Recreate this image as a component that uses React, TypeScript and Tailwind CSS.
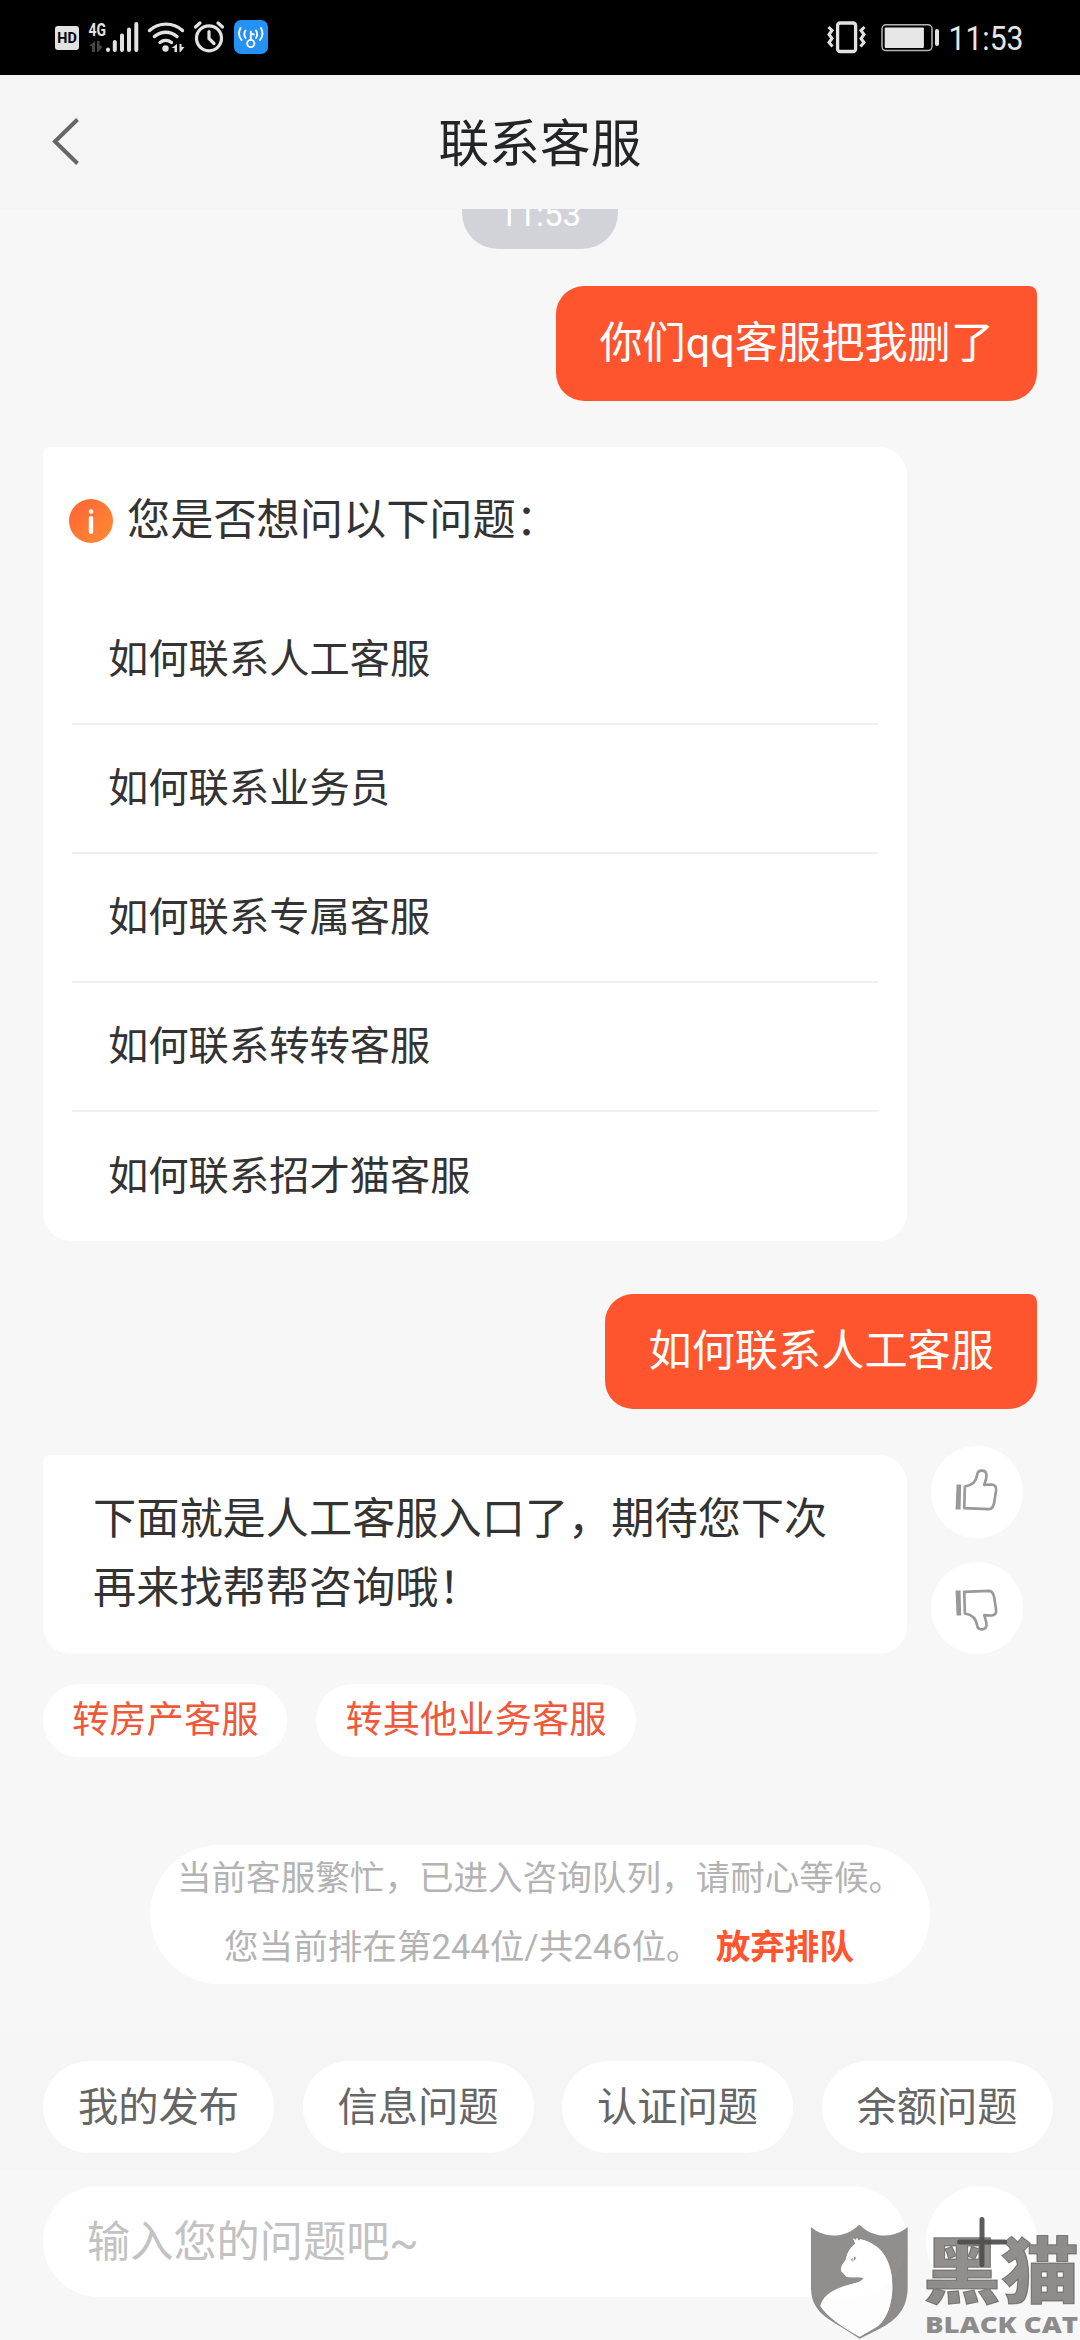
import React from 'react';
import { clsx } from 'clsx';

interface SentBubbleProps {
  text: string;
  className?: string;
}

const questions = [
  '如何联系人工客服',
  '如何联系业务员',
  '如何联系专属客服',
  '如何联系转转客服',
  '如何联系招才猫客服',
];

const transfers = ['转房产客服', '转其他业务客服'];

const shortcuts = ['我的发布', '信息问题', '认证问题', '余额问题'];

const StatusBar: React.FC = () => (
  <div className="flex h-[75px] shrink-0 justify-between bg-black">
    <svg className="h-[75px] w-[280px]" viewBox="0 0 280 75" fill="none">
      {/* HD */}
      <rect x="55" y="26" width="24" height="24" rx="3" fill="#e2e2e2" />
      <text
        x="57.3"
        y="43.3"
        fontSize="15.5"
        fontWeight="700"
        fill="#000"
        textLength="19.5"
        lengthAdjust="spacingAndGlyphs"
        fontFamily="Roboto"
      >
        HD
      </text>
      {/* mobile signal */}
      <text
        x="88.5"
        y="35.5"
        fontSize="18.5"
        fontWeight="700"
        fill="#e2e2e2"
        textLength="17.5"
        lengthAdjust="spacingAndGlyphs"
        fontFamily="Roboto"
      >
        4G
      </text>
      <path d="M95 41v11h-3v-6h-3zM97 41h2.500v4l3 2-4.500 5h-1z" fill="#454545" />
      <path
        d="M108 49.500v.5M114.800 42v8M122 35.500v14.500M129 29.500v20.500M136.300 24v26"
        stroke="#e2e2e2"
        strokeWidth="4"
        strokeLinecap="round"
      />
      {/* wifi */}
      <path
        d="M149.500 30.500a24.500 24.500 0 0 1 33 0M154.500 36.500a17 17 0 0 1 22.500 0M160 42.500a9.500 9.500 0 0 1 11.500 0"
        stroke="#e2e2e2"
        strokeWidth="3.4"
        strokeLinecap="round"
      />
      <circle cx="165.500" cy="48.500" r="3.200" fill="#e2e2e2" />
      <path d="M177 44v8h-2.500v-4h-3zM179.500 44h2v3h3l-4 5h-1z" fill="#e2e2e2" />
      {/* alarm */}
      <circle cx="209" cy="38.300" r="12.500" stroke="#e2e2e2" strokeWidth="3.200" />
      <path
        d="M209 31.500v7l5 5M195.500 27l4.500-4M222.500 27l-4.500-4"
        stroke="#e2e2e2"
        strokeWidth="3.200"
        strokeLinecap="round"
      />
      {/* hotspot app */}
      <rect x="234" y="20" width="34" height="34" rx="7" fill="#2492f5" />
      <g stroke="#fff" strokeWidth="1.900" strokeLinecap="round">
        <circle cx="250.800" cy="43.500" r="3.600" />
        <path d="M250.800 40V31.500M250.800 33.500l3 1" />
        <path d="M245.500 30.500a7 7 0 0 0 0 7.500M256 30.500a7 7 0 0 1 0 7.500" />
        <path d="M240.500 28a11 11 0 0 0 1 12M261 28a11 11 0 0 1-1 12" />
      </g>
    </svg>
    <svg className="h-[75px] w-[260px]" viewBox="820 0 260 75" fill="none">
      {/* vibrate */}
      <rect x="837.600" y="23" width="18" height="28.500" rx="2.500" stroke="#e2e2e2" strokeWidth="3.300" />
      <path
        d="M828.500 27l3.500 3.500-3 4 3 4-3 4 3.500 4M864.500 27l-3.500 3.500 3 4-3 4 3 4-3.500 4"
        stroke="#e2e2e2"
        strokeWidth="3"
      />
      {/* battery */}
      <rect x="882" y="24.800" width="50" height="25.800" rx="4" stroke="#b5b5b5" strokeWidth="1.500" />
      <rect x="884.700" y="27.500" width="39.200" height="20.500" rx="1" fill="#e6e6e6" />
      <rect x="935" y="29" width="4" height="17" rx="2" fill="#e2e2e2" />
      <text
        x="948.500"
        y="50"
        fontSize="34"
        fill="#e6e6e6"
        textLength="75"
        lengthAdjust="spacingAndGlyphs"
        fontFamily="Roboto"
      >
        11:53
      </text>
    </svg>
  </div>
);

const Header: React.FC = () => (
  <div className="grid h-[134px] shrink-0 grid-cols-3 items-center bg-[#f5f5f5]">
    <svg className="ml-[52px] h-[50px] w-[30px]" viewBox="0 0 30 50" fill="none">
      <path d="M25.500 2.500L3 24.500l22.500 22" stroke="#666" strokeWidth="4" />
    </svg>
    <h1 className="pt-[6px] text-center text-[50.7px] leading-none text-[#222426]">联系客服</h1>
  </div>
);

const SentBubble: React.FC<SentBubbleProps> = ({ text, className }) => (
  <div
    className={clsx(
      'flex h-[115px] items-center self-end rounded-[28px] rounded-tr-[8px] bg-[#ff552e] px-[43px] text-[43.2px] leading-none text-white',
      className,
    )}
  >
    {text}
  </div>
);

const Thumb: React.FC<{ down?: boolean }> = ({ down }) => (
  <button className="size-[92px] rounded-full bg-white">
    <svg className={clsx('size-full', down && '-scale-y-100')} viewBox="0 0 277 277" fill="none">
      <path d="M77 116h14l-2 75H74z" fill="#999" />
      <path
        d="M102 122C126 118 137 104 139 86C141 70 165 70 167 86C168 98 163 108 160 117L182 116Q198 117 196 133L190 172Q186 190 174 190L100 187Z"
        stroke="#999"
        strokeWidth="8"
        strokeLinejoin="round"
      />
    </svg>
  </button>
);

const InfoIcon: React.FC = () => (
  <svg className="size-[44px]" viewBox="0 0 44 44">
    <defs>
      <linearGradient id="info" x1="0" y1="0" x2="1" y2="1">
        <stop offset="0" stopColor="#ff6334" />
        <stop offset="1" stopColor="#ff8c34" />
      </linearGradient>
    </defs>
    <circle cx="22" cy="22" r="22" fill="url(#info)" />
    <circle cx="22" cy="12.500" r="2.300" fill="#fff" />
    <rect x="19.800" y="17" width="4.400" height="18" rx="2.200" fill="#fff" />
  </svg>
);

const Watermark: React.FC = () => (
  <div className="absolute right-0 bottom-0 flex h-[116px] w-[269px] text-[#504b4ba0]">
    <svg className="h-[116px] w-[98px] shrink-0" viewBox="64 74 294 348">
      <path
        d="M64 83C105 118 165 118 209 76C252 118 312 118 354 83V268C352 330 320 362 270 388L210 418L150 380C90 345 66 320 64 268Z
           M190 117L197 133C175 150 172 165 168 182C158 195 150 208 156 217L172 233C188 235 205 233 222 235C215 250 190 252 165 260C120 275 98 295 92 320C110 350 160 385 210 412L262 382C280 370 308 330 308 262C308 190 280 135 212 120L207 124L202 116L198 122Z"
        fill="currentColor"
        fillRule="evenodd"
      />
      <path
        d="M190 117L197 133C175 150 172 165 168 182C158 195 150 208 156 217L172 233C188 235 205 233 222 235C215 250 190 252 165 260C120 275 98 295 92 320C110 350 160 385 210 412L262 382C280 370 308 330 308 262C308 190 280 135 212 120L207 124L202 116L198 122Z"
        fill="#fff"
        fillOpacity=".75"
      />
      <path d="M183 181l6-6v12zM193 171l7 6-8 8z" fill="currentColor" />
    </svg>
    <svg className="h-[116px] w-[171px]" viewBox="909 2224 171 116">
      <text
        x="923"
        y="2296.500"
        fontSize="72"
        fontWeight="900"
        fill="currentColor"
        stroke="currentColor"
        strokeWidth="1"
        textLength="156"
        lengthAdjust="spacingAndGlyphs"
        fontFamily="'Noto Sans CJK SC', sans-serif"
      >
        黑猫
      </text>
      <text
        x="925"
        y="2332.500"
        fontSize="23.500"
        fontWeight="800"
        fill="currentColor"
        textLength="153"
        lengthAdjust="spacingAndGlyphs"
        fontFamily="'Open Sans', sans-serif"
      >
        BLACK CAT
      </text>
    </svg>
  </div>
);

const App: React.FC = () => (
  <div
    lang="zh-CN"
    className="relative flex h-[2340px] w-[1080px] flex-col overflow-hidden bg-[#f7f7f7] font-[Roboto,'Noto_Sans_CJK_SC',sans-serif] text-[#333]"
  >
    <StatusBar />
    <Header />

    {/* messages, scrolled so the time stamp is half hidden */}
    <div className="flex h-[1823px] shrink-0 flex-col overflow-hidden px-[43px]">
      <div className="-mt-[32px] flex h-[72px] w-[156px] shrink-0 items-center justify-center self-center rounded-full bg-[#d2d3d9] pt-[2px] text-[33px] leading-none text-white">
        11:53
      </div>

      <SentBubble text="你们qq客服把我删了" className="mt-[37px] shrink-0" />

      <div className="mt-[46px] w-[864px] shrink-0 rounded-[28px] rounded-tl-[8px] bg-white pl-[29px] pr-[29px]">
        <div className="-ml-[3px] flex h-[149px] items-center gap-[14px] pb-[1px] text-[43.2px] leading-none">
          <InfoIcon />
          <span>您是否想问以下问题：</span>
        </div>
        {questions.map((question) => (
          <div
            key={question}
            className="flex h-[129px] items-center border-b-2 border-[#f0f0f0] pt-[1px] pl-[36px] text-[40.3px] leading-none last:border-b-0"
          >
            {question}
          </div>
        ))}
      </div>

      <SentBubble text="如何联系人工客服" className="mt-[53px] shrink-0" />

      <div className="mt-[37px] flex shrink-0 items-end gap-[24px]">
        <div className="h-[199px] w-[864px] rounded-[28px] rounded-tl-[8px] bg-white pt-[30px] pl-[50px] text-[43.2px] leading-[69px]">
          下面就是人工客服入口了，期待您下次
          <br />
          再来找帮帮咨询哦！
        </div>
        <div className="flex flex-col gap-[24px]">
          <Thumb />
          <Thumb down />
        </div>
      </div>

      <div className="mt-[30px] flex shrink-0 gap-[29px]">
        {transfers.map((item) => (
          <button
            key={item}
            className="h-[73px] rounded-full bg-white px-[29px] text-[37.3px] leading-none text-[#f0583a]"
          >
            {item}
          </button>
        ))}
      </div>

      <div className="mt-[88px] flex h-[139px] w-[780px] shrink-0 flex-col items-center self-center rounded-full bg-white text-[34.6px] leading-[69px] whitespace-nowrap text-[#b3b3b3]">
        <p className="-mt-[1px]">当前客服繁忙，已进入咨询队列，请耐心等候。</p>
        <p className="mr-[2px]">
          您当前排在第244位/共246位。
          <span className="ml-[15px] font-bold text-[#ff552e]">放弃排队</span>
        </p>
      </div>
    </div>

    <div className="flex h-[138px] shrink-0 gap-[28.5px] bg-[#f5f5f5] pt-[29px] pl-[43px]">
      {shortcuts.map((item) => (
        <button
          key={item}
          className="h-[92px] w-[231px] shrink-0 rounded-full bg-white pt-[2px] text-[40.3px] leading-none text-[#666]"
        >
          {item}
        </button>
      ))}
    </div>

    <div className="flex shrink-0 gap-[19px] px-[43px] pt-[16px]">
      <div className="flex h-[111px] w-[864px] items-center rounded-full bg-white pt-[2px] pl-[44px] text-[43.2px] leading-none text-[#c2c2c2]">
        输入您的问题吧~
      </div>
      <button className="flex size-[111px] items-center justify-center rounded-full bg-white">
        <svg className="size-[50px]" viewBox="0 0 50 50">
          <path d="M25 2.500v45M2.500 25h45" stroke="#5c5c5c" strokeWidth="5" strokeLinecap="round" />
        </svg>
      </button>
    </div>

    <Watermark />
  </div>
);

export default App;
